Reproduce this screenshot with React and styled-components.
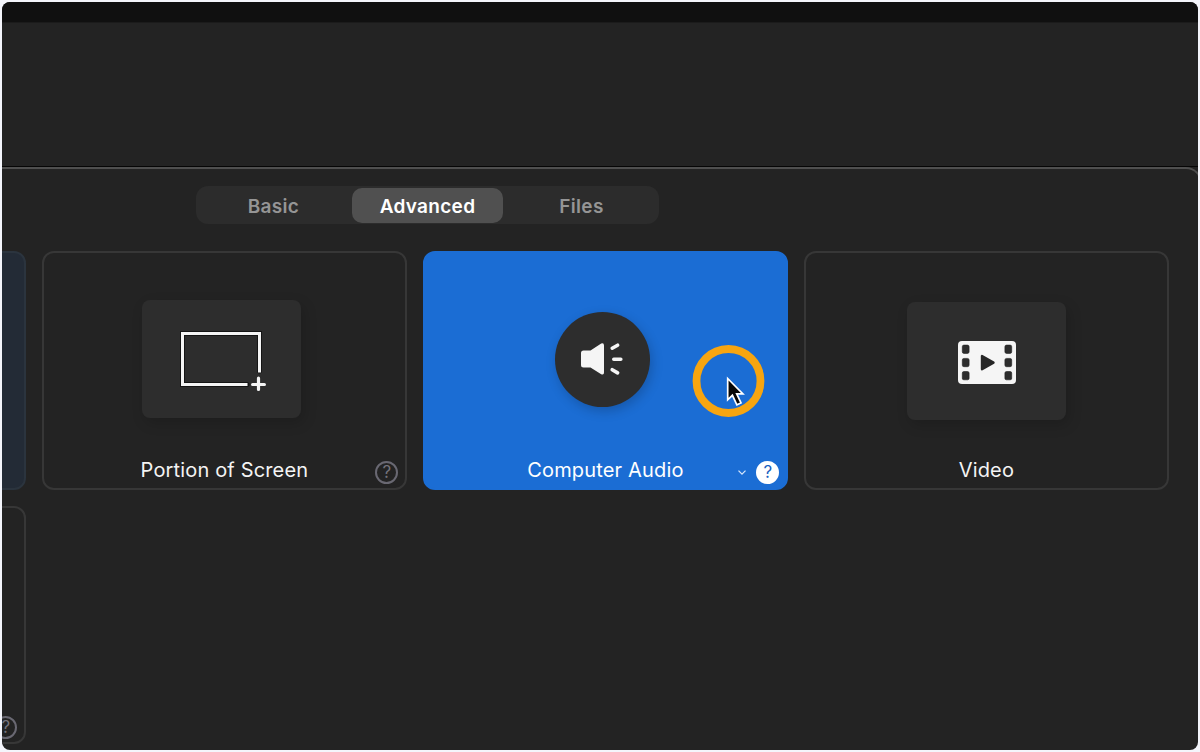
import React, { useState } from 'react'
import styled, { createGlobalStyle } from 'styled-components'

const GlobalStyle = createGlobalStyle`
  body {
    margin: 0;
    background: #f4f5fb;
    font-family: Inter, 'Liberation Sans', sans-serif;
    -webkit-font-smoothing: antialiased;
  }
`

const Window = styled.div`
  box-sizing: border-box;
  width: 1196px;
  height: 748px;
  margin: 2px;
  border-radius: 8px;
  overflow: hidden;
  background: #232323;
  display: flex;
  flex-direction: column;
`

const TitleBar = styled.div`
  flex: none;
  height: 20px;
  background: #101010;
  border-bottom: 1px solid #1b1b1b;
`

const Stage = styled.div`
  flex: none;
  height: 143px;
  border-bottom: 1px solid #060606;
`

const Panel = styled.section`
  box-sizing: border-box;
  flex: 1;
  width: 1200px;
  border-top: 2px solid #4f4f4f;
  border-right: 2px solid #4f4f4f;
  border-top-right-radius: 16px;
  padding-top: 17px;
`

const Tabs = styled.div`
  box-sizing: border-box;
  display: grid;
  grid-template-columns: 151px 151px 151px;
  gap: 3px;
  width: 463px;
  height: 38px;
  margin-left: 194px;
  padding: 2px;
  border-radius: 12px;
  background: #2c2c2c;
`

const Tab = styled.button`
  height: 35px;
  padding: 2px 0 0;
  border: 0;
  border-radius: 10px;
  background: ${props => (props.$active ? '#505050' : 'transparent')};
  color: ${props => (props.$active ? '#fff' : '#959595')};
  font-family: inherit;
  font-size: 19px;
  font-weight: 600;
  letter-spacing: 0.3px;
  cursor: pointer;
`

const Grid = styled.div`
  display: grid;
  grid-template-columns: repeat(4, 365px);
  grid-auto-rows: 238.5px;
  gap: 16px;
  margin: 27px 0 0 -340.6px;
`

const CardBox = styled.div`
  box-sizing: border-box;
  position: relative;
  display: flex;
  flex-direction: column;
  justify-content: space-between;
  border: 2px solid #373737;
  border-radius: 12px;
  color: #f4f4f4;
  ${props => props.$tinted && `background: #232b36; border-color: #2b343e;`}
  ${props => props.$selected && `background: #1b6dd4; border-color: #1b6dd4; color: #fff;`}
`

const Preview = styled.div`
  display: flex;
  justify-content: center;
  padding-top: ${props => props.$top}px;
  padding-right: ${props => props.$shift || 0}px;
`

const Tile = styled.div`
  display: flex;
  align-items: center;
  justify-content: center;
  width: 159px;
  height: 118px;
  border-radius: 8px;
  background: #2d2d2d;
  box-shadow: 3px 5px 14px rgba(0, 0, 0, 0.16);
`

const Disc = styled(Tile)`
  width: 95px;
  height: 95px;
  border-radius: 50%;
  box-shadow: 2px 4px 12px rgba(0, 0, 0, 0.2);
`

const Footer = styled.div`
  display: grid;
  grid-template-columns: 1fr auto 1fr;
  align-items: center;
  height: 24px;
  padding: 0 7px 3px;
`

const Name = styled.span`
  grid-column: 2;
  font-size: 20px;
  line-height: 24px;
  letter-spacing: 0.16px;
  white-space: nowrap;
  margin-right: 1px;
  transform: translateY(-3px);
`

const Actions = styled.div`
  grid-column: 3;
  display: flex;
  align-items: center;
  justify-content: flex-end;
  gap: 9px;
`

const Help = styled.span`
  box-sizing: border-box;
  display: flex;
  align-items: center;
  justify-content: center;
  width: 23px;
  height: 23px;
  border: 2px solid ${props => (props.$filled ? '#fff' : '#696872')};
  border-radius: 50%;
  background: ${props => (props.$filled ? '#fff' : 'transparent')};
  color: ${props => (props.$filled ? '#1b5fc0' : '#74737c')};
  font-size: 17px;
  font-weight: 400;
  line-height: 19px;
`

const Pointer = styled.svg`
  position: absolute;
  top: 91px;
  left: 267px;
`

function PortionIcon() {
  return (
    <svg width='89' height='64' viewBox='0 0 89 64' fill='none' stroke='#f5f5f5' strokeWidth='3'>
      <path d='M82.5 44V6.5H5.5V57.5H70' stroke='#151515' strokeWidth='5' strokeLinecap='round' />
      <path d='M82.5 45.5V6.5H5.5V57.5H70.5' />
      <path d='M81.5 51.2V62.4M75.6 57.5H87.4' strokeWidth='3.2' strokeLinecap='round' />
    </svg>
  )
}

function SpeakerIcon() {
  return (
    <svg width='45' height='38' viewBox='0 0 45 38' fill='#f5f5f5'>
      <path d='M3.5 9.5H10.5L21.2 2.5Q24 1.5 24 4.5V31.5Q24 34.5 21.2 33.2L10.5 26.5H3.5Q1 26.5 1 24V12Q1 9.5 3.5 9.5Z' />
      <path
        d='M32.2 7.2L37.6 4.2M33.8 18.2H40.8M32.2 28.7L37.6 31.9'
        fill='none'
        stroke='#f5f5f5'
        strokeWidth='3.6'
        strokeLinecap='round'
      />
    </svg>
  )
}

function FilmIcon() {
  const holes = [4.3, 17.6, 30.7]
  return (
    <svg width='58' height='45' viewBox='0 -2 58 45'>
      <rect width='58' height='43' rx='4' fill='#f5f5f5' />
      {holes.map(y => (
        <g key={y} fill='#2d2d2d' stroke='#202020' strokeWidth='0.6'>
          <rect x='4.3' y={y - 0.2} width='6.8' height='8.3' rx='1.6' />
          <rect x='46.9' y={y - 0.2} width='6.8' height='8.3' rx='1.6' />
        </g>
      ))}
      <path
        d='M24 15V28.2L35.5 21.6Z'
        fill='#262626'
        stroke='#262626'
        strokeWidth='2.4'
        strokeLinejoin='round'
      />
    </svg>
  )
}

function Chevron() {
  return (
    <svg width='10' height='6' viewBox='0 0 10 6' fill='none' stroke='#d7e6fb' strokeWidth='1.3'>
      <path d='M1.5 0.6L5 4.1L8.5 0.6' />
    </svg>
  )
}

export default function App() {
  const [tab, setTab] = useState('Advanced')

  return (
    <>
      <GlobalStyle />
      <Window>
        <TitleBar />
        <Stage />
        <Panel>
          <Tabs>
            {['Basic', 'Advanced', 'Files'].map(name => (
              <Tab key={name} $active={tab === name} onClick={() => setTab(name)}>
                {name}
              </Tab>
            ))}
          </Tabs>
          <Grid>
            <CardBox $tinted />
            <CardBox>
              <Preview $top={47} $shift={6}>
                <Tile>
                  <PortionIcon />
                </Tile>
              </Preview>
              <Footer>
                <Name>Portion of Screen</Name>
                <Actions>
                  <Help>?</Help>
                </Actions>
              </Footer>
            </CardBox>
            <CardBox $selected>
              <Preview $top={59} $shift={6}>
                <Disc>
                  <SpeakerIcon />
                </Disc>
              </Preview>
              <Footer>
                <Name>Computer Audio</Name>
                <Actions>
                  <Chevron />
                  <Help $filled>?</Help>
                </Actions>
              </Footer>
              <Pointer width='74' height='74' viewBox='0 0 74 74'>
                <circle cx='36.5' cy='37' r='32' fill='none' stroke='#f7a510' strokeWidth='7.8' />
                <path
                  d='M35.7 34.5V55.8L40.4 51.3L44.9 60.8L49 58.9L44.7 49.8H50.9Z'
                  fill='#080808'
                  stroke='#fff'
                  strokeWidth='1.7'
                />
              </Pointer>
            </CardBox>
            <CardBox>
              <Preview $top={49}>
                <Tile>
                  <FilmIcon />
                </Tile>
              </Preview>
              <Footer>
                <Name>Video</Name>
              </Footer>
            </CardBox>
            <CardBox>
              <Preview $top={0} />
              <Footer>
                <Actions>
                  <Help>?</Help>
                </Actions>
              </Footer>
            </CardBox>
          </Grid>
        </Panel>
      </Window>
    </>
  )
}
